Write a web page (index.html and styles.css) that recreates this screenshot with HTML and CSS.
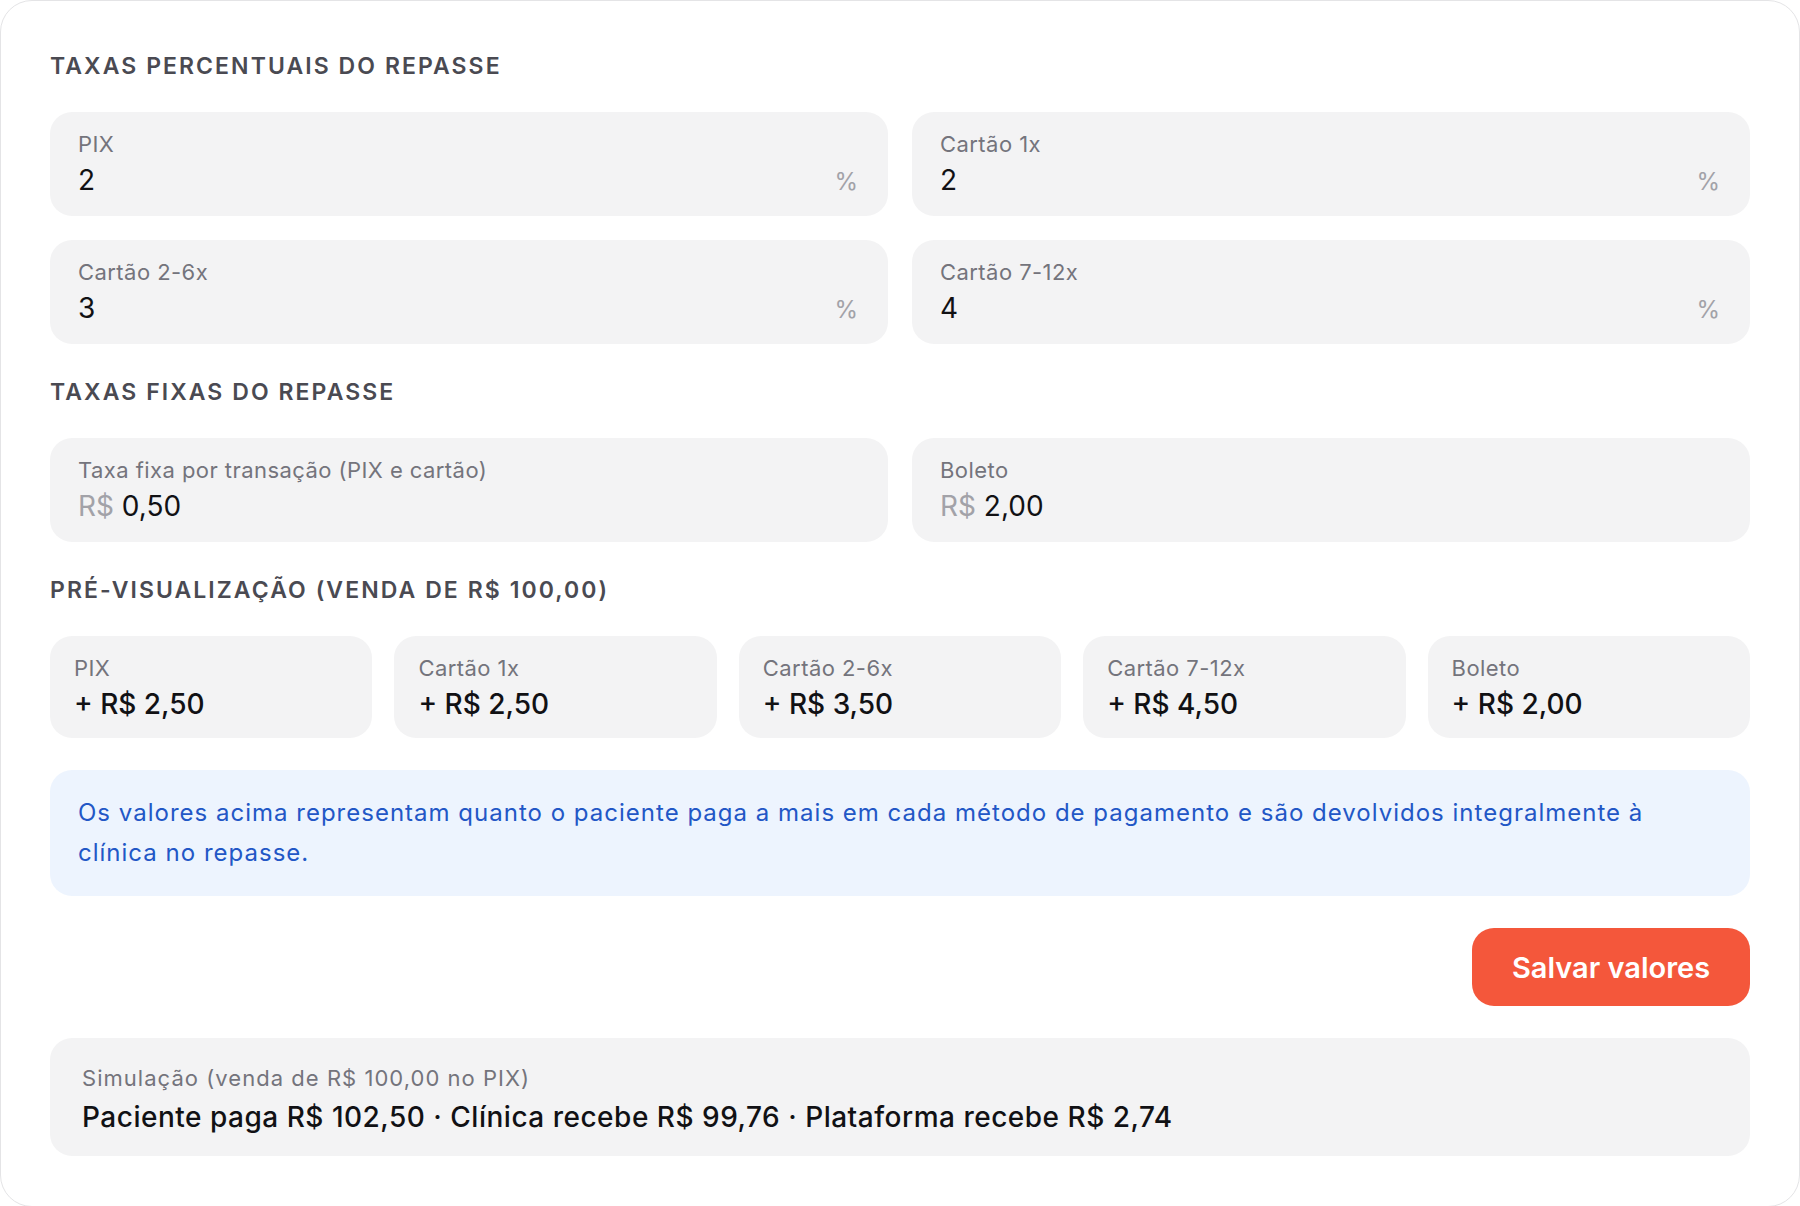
FILE: index.html
```html
<!DOCTYPE html>
<html lang="pt-BR">
   <head>
      <meta charset="utf-8">
      <meta name="viewport" content="width=device-width, initial-scale=1">
      <title>Taxas do repasse</title>
      <link rel="stylesheet" href="styles.css">
   </head>
   <body>
      <div class="panel">

         <!--
         Taxas percentuais
         -->
         <h2 class="section-title">Taxas percentuais do repasse</h2>
         <div class="fields">
            <div class="field">
               <label class="field-label">PIX</label>
               <div class="field-row">
                  <span class="field-value">2</span>
                  <span class="suffix">%</span>
               </div>
            </div>
            <div class="field">
               <label class="field-label">Cartão 1x</label>
               <div class="field-row">
                  <span class="field-value">2</span>
                  <span class="suffix">%</span>
               </div>
            </div>
            <div class="field">
               <label class="field-label">Cartão 2-6x</label>
               <div class="field-row">
                  <span class="field-value">3</span>
                  <span class="suffix">%</span>
               </div>
            </div>
            <div class="field">
               <label class="field-label">Cartão 7-12x</label>
               <div class="field-row">
                  <span class="field-value">4</span>
                  <span class="suffix">%</span>
               </div>
            </div>
         </div>

         <!--
         Taxas fixas
         -->
         <h2 class="section-title">Taxas fixas do repasse</h2>
         <div class="fields">
            <div class="field">
               <label class="field-label">Taxa fixa por transação (PIX e cartão)</label>
               <div class="field-row">
                  <span class="field-value"><span class="prefix">R$</span> 0,50</span>
               </div>
            </div>
            <div class="field">
               <label class="field-label">Boleto</label>
               <div class="field-row">
                  <span class="field-value"><span class="prefix">R$</span> 2,00</span>
               </div>
            </div>
         </div>

         <!--
         Pre-visualizacao
         -->
         <h2 class="section-title">Pré-visualização (venda de R$ 100,00)</h2>
         <div class="preview">
            <div class="preview-card">
               <div class="field-label">PIX</div>
               <div class="preview-value">+ R$ 2,50</div>
            </div>
            <div class="preview-card">
               <div class="field-label">Cartão 1x</div>
               <div class="preview-value">+ R$ 2,50</div>
            </div>
            <div class="preview-card">
               <div class="field-label">Cartão 2-6x</div>
               <div class="preview-value">+ R$ 3,50</div>
            </div>
            <div class="preview-card">
               <div class="field-label">Cartão 7-12x</div>
               <div class="preview-value">+ R$ 4,50</div>
            </div>
            <div class="preview-card">
               <div class="field-label">Boleto</div>
               <div class="preview-value">+ R$ 2,00</div>
            </div>
         </div>

         <p class="info">Os valores acima representam quanto o paciente paga a mais em cada método de pagamento e são devolvidos integralmente à clínica no repasse.</p>

         <div class="actions">
            <button type="button" class="save">Salvar valores</button>
         </div>

         <div class="simulation">
            <div class="simulation-label">Simulação (venda de R$ 100,00 no PIX)</div>
            <div class="simulation-value">Paciente paga R$ 102,50 · Clínica recebe R$ 99,76 · Plataforma recebe R$ 2,74</div>
         </div>

      </div>
   </body>
</html>
```

FILE: styles.css
```css
body {
   margin : 0px;
   font-family : Inter, "Noto Sans", "Liberation Sans", sans-serif;
   color : #111114;
   background-color : #ffffff;
}

.panel {
   border : 1px solid #e4e4e6;
   border-radius : 32px;
   padding : 51px 49px 50px 49px;
   background-color : #ffffff;
}

.section-title {
   margin : 0px 0px 32px 0px;
   font-size : 23px;
   line-height : 28px;
   font-weight : 600;
   letter-spacing : 0.09em;
   text-transform : uppercase;
   color : #4a4a52;
}

.fields {
   display : grid;
   grid-template-columns : 1fr 1fr;
   gap : 24px;
   margin-bottom : 34px;
}

.field {
   background-color : #f3f3f4;
   border-radius : 22px;
   padding : 18px 30px 18px 28px;
}

.field-label {
   display : block;
   font-size : 22px;
   line-height : 28px;
   letter-spacing : 0.02em;
   color : #74747c;
}

.field-row {
   display : flex;
   justify-content : space-between;
   align-items : baseline;
   margin-top : 4px;
}

.field-value {
   font-size : 28px;
   line-height : 36px;
   color : #111114;
}

.prefix {
   color : #a2a2a8;
}

.suffix {
   font-size : 24px;
   color : #a2a2a8;
}

.preview {
   display : grid;
   grid-template-columns : repeat(5, 1fr);
   gap : 22px;
   margin-bottom : 32px;
}

.preview-card {
   background-color : #f3f3f4;
   border-radius : 22px;
   padding : 18px 24px 16px 24px;
}

.preview-value {
   margin-top : 4px;
   font-size : 28px;
   line-height : 36px;
   font-weight : 500;
   color : #111114;
}

.info {
   margin : 0px 0px 32px 0px;
   padding : 23px 60px 23px 28px;
   background-color : #edf4fe;
   border-radius : 22px;
   font-size : 24px;
   line-height : 40px;
   letter-spacing : 0.042em;
   color : #2257c6;
}

.actions {
   display : flex;
   justify-content : flex-end;
   margin-bottom : 32px;
}

.save {
   width : 278px;
   height : 78px;
   border : none;
   border-radius : 22px;
   background-color : #f4573b;
   color : #ffffff;
   font-family : inherit;
   font-size : 29px;
   font-weight : 600;
   cursor : pointer;
}

.simulation {
   background-color : #f3f3f4;
   border-radius : 22px;
   padding : 26px 32px 22px 32px;
}

.simulation-label {
   font-size : 22px;
   line-height : 28px;
   letter-spacing : 0.047em;
   color : #74747c;
}

.simulation-value {
   margin-top : 8px;
   font-size : 28px;
   line-height : 34px;
   letter-spacing : 0.018em;
   font-weight : 500;
   color : #111114;
}
```
